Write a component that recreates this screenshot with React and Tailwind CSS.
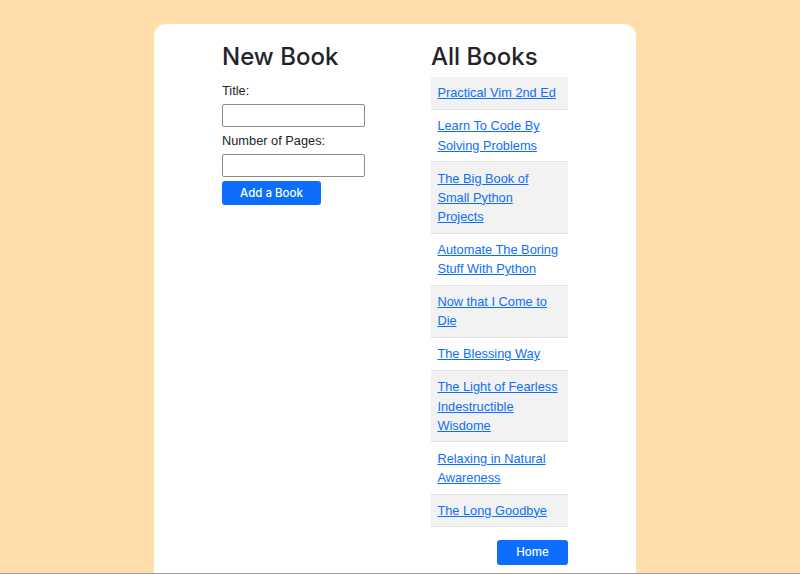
import React from "react";

const books = [
  ["Practical Vim 2nd Ed"],
  ["Learn To Code By", "Solving Problems"],
  ["The Big Book of", "Small Python", "Projects"],
  ["Automate The Boring", "Stuff With Python"],
  ["Now that I Come to", "Die"],
  ["The Blessing Way"],
  ["The Light of Fearless", "Indestructible", "Wisdome"],
  ["Relaxing in Natural", "Awareness"],
  ["The Long Goodbye"],
];

export default function App() {
  return (
    <div
      className="w-[800px] h-[574px] overflow-hidden bg-[#ffdeab] flex flex-col text-[#212529]"
      style={{ fontFamily: '"Liberation Sans", Arial, sans-serif' }}
    >
      <div className="ml-[154px] mt-[24px] w-[482px] flex-1 bg-white rounded-t-[12px] pt-[18px] pb-[8px] px-[68px] flex justify-between">
        {/* Left column */}
        <div className="w-[143px] flex flex-col">
          <h2 className="text-[24px] leading-[29px] font-medium font-['Inter',sans-serif] whitespace-nowrap">
            New Book
          </h2>
          <label className="mt-[10px] text-[12.8px] leading-[19.2px]">Title:</label>
          <input
            type="text"
            className="mt-[4px] h-[23px] w-[143px] border border-[#8a8a8a] rounded-[2px] bg-white"
          />
          <label className="mt-[4px] text-[12.8px] leading-[19.2px] whitespace-nowrap">
            Number of Pages:
          </label>
          <input
            type="text"
            className="mt-[4px] h-[23px] w-[143px] border border-[#8a8a8a] rounded-[2px] bg-white"
          />
          <button className="mt-[4px] h-[24px] w-[99px] rounded-[3px] bg-[#0d6efd] text-white text-[11.5px] font-medium font-['Inter',sans-serif] flex items-center justify-center">
            Add a Book
          </button>
        </div>

        {/* Right column */}
        <div className="w-[137px] flex flex-col">
          <h2 className="text-[24px] leading-[29px] font-medium font-['Inter',sans-serif] whitespace-nowrap">
            All Books
          </h2>
          <div className="mt-[6px] flex flex-col">
            {books.map((lines, i) => (
              <div
                key={i}
                className={
                  "px-[6.4px] py-[6.4px] border-b border-[#e2e3e5] text-[12.8px] leading-[19.2px] " +
                  (i % 2 === 0 ? "bg-[#f2f2f2]" : "bg-white")
                }
              >
                <a
                  href="#"
                  className="text-[#0d6efd] underline whitespace-nowrap"
                >
                  {lines.map((l, j) => (
                    <React.Fragment key={j}>
                      {j > 0 && <br />}
                      {l}
                    </React.Fragment>
                  ))}
                </a>
              </div>
            ))}
          </div>
          <button className="mt-[13px] self-end h-[25px] w-[71px] rounded-[3px] bg-[#0d6efd] text-white text-[11.5px] font-medium font-['Inter',sans-serif] flex items-center justify-center">
            Home
          </button>
        </div>
      </div>
      <div className="h-[1px] w-full bg-[#a0a0a0] shrink-0"></div>
    </div>
  );
}
